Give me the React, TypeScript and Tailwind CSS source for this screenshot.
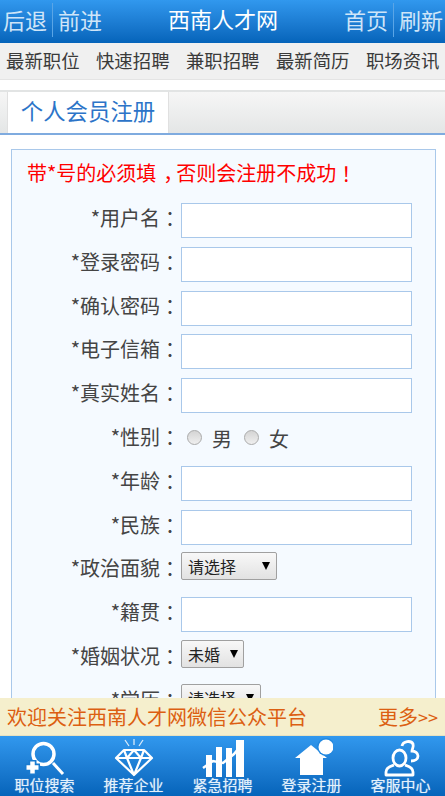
const CJK = "font-['Noto_Sans_CJK_SC','Liberation_Sans',sans-serif]";

const fields = [
  { label: "*用户名", type: "input" },
  { label: "*登录密码", type: "input" },
  { label: "*确认密码", type: "input" },
  { label: "*电子信箱", type: "input" },
  { label: "*真实姓名", type: "input" },
  { label: "*性别", type: "radio" },
  { label: "*年龄", type: "input" },
  { label: "*民族", type: "input" },
  { label: "*政治面貌", type: "select", value: "请选择", width: "w-[96px]", gap: "w-[22px]" },
  { label: "*籍贯", type: "input" },
  { label: "*婚姻状况", type: "select", value: "未婚", width: "w-[63px]", gap: "w-[6px]" },
  { label: "*学历", type: "select", value: "请选择", width: "w-[80px]", gap: "w-[6px]" },
];

const Punct = ({ children }: { children: string }) => (
  <span className="relative top-[1px] font-['Noto_Sans_CJK_TC',sans-serif]">{children}</span>
);

const SelectBox = ({ value, width, gap }: { value?: string; width?: string; gap?: string }) => (
  <div
    className={`-mt-[1px] flex h-[28px] items-center rounded-[2px] border border-[#a0a0a0] bg-gradient-to-b from-[#f8f8f8] to-[#e2e2e2] pl-[6px] text-[16px] text-[#222] ${width}`}
  >
    <span>{value}</span>
    <span className={gap} />
    <span className="ml-[4px] h-0 w-0 border-x-[4px] border-t-[8px] border-x-transparent border-t-black" />
  </div>
);

const Radio = () => (
  <span className="h-[15px] w-[15px] rounded-full border border-[#aaa] bg-gradient-to-b from-[#d4d4d4] to-[#efefef]" />
);

const SearchIcon = () => (
  <svg width="40" height="40" viewBox="0 0 40 40" fill="none">
    <circle cx="18.5" cy="17" r="10.5" stroke="white" strokeWidth="3.5" />
    <path d="M28 26l10 11" stroke="white" strokeWidth="3" />
    <path d="M7.5 23v15M0 30.5h15" stroke="#1a7bd0" strokeWidth="8" />
    <path d="M7.5 24.5v12M1.5 30.5h12" stroke="white" strokeWidth="4.5" />
  </svg>
);

const DiamondIcon = () => (
  <svg width="40" height="40" viewBox="0 0 40 40" fill="none">
    <path
      d="M10 13h20l8 8-18 17L2 21z M2 21h36 M13 21l7 17 7-17 M10 13l3 8 7-8 7 8 3-8"
      stroke="white"
      strokeWidth="2.2"
      strokeLinejoin="round"
    />
    <path d="M20 2v6M11 3l4 6M29 3l-4 6" stroke="white" strokeWidth="1.3" opacity="0.8" />
  </svg>
);

const ChartIcon = () => (
  <svg width="44" height="40" viewBox="0 0 44 40" fill="white">
    <rect x="5" y="18" width="6" height="22" />
    <rect x="15" y="10" width="6" height="30" />
    <rect x="25" y="11" width="6" height="29" />
    <rect x="35" y="3" width="8" height="37" />
    <path d="M2 31 L12 24 L22 26 L33 17 L42 6" fill="none" stroke="white" strokeWidth="2.5" />
  </svg>
);

const HomeIcon = () => (
  <svg width="42" height="40" viewBox="0 0 42 40" fill="white">
    <path d="M20 8 L4 21 H9 V38 H32 V21 H36 z" />
    <circle cx="35" cy="10" r="9" fill="#2288e0" />
    <circle cx="35" cy="10" r="7.5" />
  </svg>
);

const ServiceIcon = () => (
  <svg width="38" height="40" viewBox="0 0 38 40" fill="none" stroke="white" strokeWidth="2.8">
    <ellipse cx="17.5" cy="21" rx="6.5" ry="8" />
    <path d="M12 28c-3 1-8 2-8 7v3h27v-3c0-5-5-6-8-7" strokeLinejoin="round" />
    <path d="M20 9c1-5 9-6 11-2 1 3-1 5-1 7 3 0 6 2 6 5s-3 5-7 5" />
  </svg>
);

const tabs = [
  { label: "职位搜索", icon: <SearchIcon /> },
  { label: "推荐企业", icon: <DiamondIcon /> },
  { label: "紧急招聘", icon: <ChartIcon /> },
  { label: "登录注册", icon: <HomeIcon /> },
  { label: "客服中心", icon: <ServiceIcon /> },
];

export default function App() {
  return (
    <div className={`flex h-[796px] w-[445px] flex-col overflow-hidden bg-white ${CJK}`}>
      <header className="flex h-[43px] shrink-0 items-center justify-between bg-gradient-to-b from-[#3198ee] to-[#0564ba] pr-[2px] pb-[4px] pl-[3px] text-[22px] text-[#cfe5f8]">
        <div className="flex items-center">
          <span>后退</span>
          <span className="mx-[5px] h-[34px] w-px bg-[#5aa5e6]" />
          <span>前进</span>
        </div>
        <div className="mb-[3px] text-white">西南人才网</div>
        <div className="flex items-center">
          <span>首页</span>
          <span className="mx-[5px] h-[34px] w-px bg-[#5aa5e6]" />
          <span>刷新</span>
        </div>
      </header>

      <nav className="flex h-[37px] shrink-0 items-center gap-[16.4px] border-b border-[#e4e4e4] bg-[#f0f0f0] pl-[6px] text-[18.4px] whitespace-nowrap text-[#3a3a3a]">
        <span>最新职位</span>
        <span>快速招聘</span>
        <span>兼职招聘</span>
        <span>最新简历</span>
        <span>职场资讯</span>
      </nav>

      <main className="min-h-0 flex-1 overflow-hidden">
        <div className="mt-[10px] flex h-[45px] border-t-2 border-b-2 border-t-[#e2e4e4] border-b-[#7fabdf] bg-gradient-to-b from-[#f6f6f6] to-[#e4e6e6] pl-[7px]">
          <div className="flex w-[162px] items-center justify-center border-x border-[#e0e0e0] bg-white pb-[3px] text-[22.4px] text-[#2c74c8]">
            个人会员注册
          </div>
        </div>

        <section className="mt-[14px] mr-[9px] ml-[11px] border border-[#a9c8ea] bg-[#f5faff] pt-[10px]">
          <p className="h-[43px] pl-[15px] text-[20px] leading-[26px] text-[#ff0000]">
            带*号的必须填<span className="relative left-[7px]">，</span>否则会注册不成功<Punct>！</Punct>
          </p>
          {fields.map((field) => (
            <div key={field.label} className="flex h-[43.8px] items-start">
              <label className="mr-[1px] flex h-[30px] w-[168px] shrink-0 items-center justify-end text-[20px] text-[#444]">
                {field.label}
                <Punct>：</Punct>
              </label>
              {field.type === "input" && (
                <input className="h-[35px] w-[231px] border border-[#a9c8ea] bg-white outline-none" />
              )}
              {field.type === "select" && (
                <SelectBox value={field.value} width={field.width} gap={field.gap} />
              )}
              {field.type === "radio" && (
                <div className="flex h-[35px] items-center text-[20px] text-[#444]">
                  <span className="ml-[6px] flex -translate-y-[2px]"><Radio /></span>
                  <span className="ml-[10px]">男</span>
                  <span className="ml-[12px] flex -translate-y-[2px]"><Radio /></span>
                  <span className="ml-[10px]">女</span>
                </div>
              )}
            </div>
          ))}
        </section>
      </main>

      <div className="flex h-[38px] shrink-0 items-center justify-between border-b border-[#e8e2c0] bg-[#f5efcd] pr-[7px] pl-[7px] text-[20px] text-[#dc5f12]">
        <span>欢迎关注西南人才网微信公众平台</span>
        <span>
          更多<span className="text-[18px]">&gt;&gt;</span>
        </span>
      </div>

      <footer className="grid h-[60px] shrink-0 grid-cols-5 bg-gradient-to-b from-[#3198ee] to-[#0564ba]">
        {tabs.map((tab) => (
          <div key={tab.label} className="flex flex-col items-center pt-[1px]">
            <div className="flex h-[40px] items-center justify-center">{tab.icon}</div>
            <span className="-mt-[1px] text-[15px] leading-[18px] text-[#e4f1fb] [text-shadow:0_0_1px_rgba(255,255,255,0.6)]">
              {tab.label}
            </span>
          </div>
        ))}
      </footer>
    </div>
  );
}
